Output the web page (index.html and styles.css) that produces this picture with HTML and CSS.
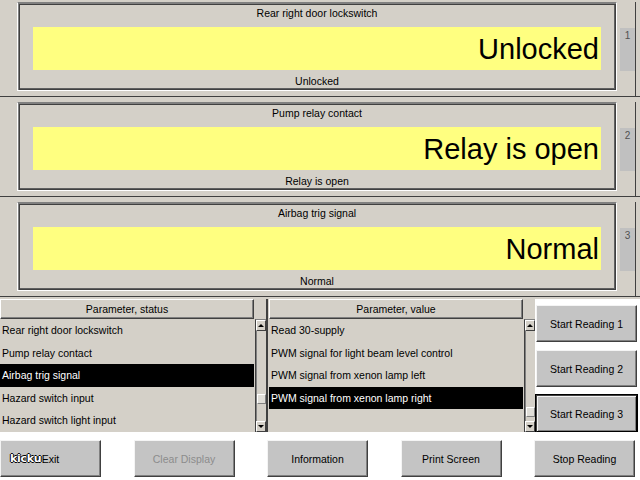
FILE: index.html
```html
<!DOCTYPE html>
<html>
<head>
<meta charset="utf-8">
<link rel="stylesheet" href="styles.css">
</head>
<body>
<div class="screen">
  <div class="rows">
    <div class="row">
      <div class="row-inner">
        <div class="gutter"></div>
        <div class="frame">
          <div class="frame-title">Rear right door lockswitch</div>
          <div class="display">Unlocked</div>
          <div class="frame-status">Unlocked</div>
        </div>
        <div class="tab-col"><div class="tab">1</div></div>
      </div>
      <div class="row-sep"></div>
    </div>
    <div class="row">
      <div class="row-inner">
        <div class="gutter"></div>
        <div class="frame">
          <div class="frame-title">Pump relay contact</div>
          <div class="display">Relay is open</div>
          <div class="frame-status">Relay is open</div>
        </div>
        <div class="tab-col"><div class="tab">2</div></div>
      </div>
      <div class="row-sep"></div>
    </div>
    <div class="row row-last">
      <div class="row-inner">
        <div class="gutter"></div>
        <div class="frame">
          <div class="frame-title">Airbag trig signal</div>
          <div class="display">Normal</div>
          <div class="frame-status">Normal</div>
        </div>
        <div class="tab-col"><div class="tab">3</div></div>
      </div>
      <div class="row-sep"></div>
    </div>
  </div>

  <div class="middle">
    <div class="list">
      <div class="list-body">
        <div class="list-header">Parameter, status</div>
        <div class="list-row">Rear right door lockswitch</div>
        <div class="list-row">Pump relay contact</div>
        <div class="list-row selected">Airbag trig signal</div>
        <div class="list-row">Hazard switch input</div>
        <div class="list-row">Hazard switch light input</div>
      </div>
      <div class="scroll-col">
        <div class="scroll-head"></div>
        <div class="scrollbar">
          <div class="sb-btn"><span class="arrow-up"></span></div>
          <div class="sb-track"><div class="sb-thumb thumb-a"></div></div>
          <div class="sb-btn"><span class="arrow-down"></span></div>
        </div>
      </div>
    </div>
    <div class="list-divider"></div>
    <div class="list">
      <div class="list-body">
        <div class="list-header">Parameter, value</div>
        <div class="list-row">Read 30-supply</div>
        <div class="list-row">PWM signal for light beam level control</div>
        <div class="list-row">PWM signal from xenon lamp left</div>
        <div class="list-row selected">PWM signal from xenon lamp right</div>
        <div class="list-row"></div>
      </div>
      <div class="scroll-col">
        <div class="scroll-head"></div>
        <div class="scrollbar">
          <div class="sb-btn"><span class="arrow-up"></span></div>
          <div class="sb-track"><div class="sb-thumb thumb-b"></div></div>
          <div class="sb-btn"><span class="arrow-down"></span></div>
        </div>
      </div>
    </div>
    <div class="side-buttons">
      <div class="btn">Start Reading 1</div>
      <div class="btn">Start Reading 2</div>
      <div class="btn btn-default">Start Reading 3</div>
    </div>
  </div>

  <div class="bottom-bar">
    <div class="btn">Exit</div>
    <div class="btn btn-disabled">Clear Display</div>
    <div class="btn">Information</div>
    <div class="btn">Print Screen</div>
    <div class="btn">Stop Reading</div>
  </div>

  <div class="watermark">kicku</div>
</div>
</body>
</html>
```

FILE: styles.css
```css
* { box-sizing: border-box; }

html, body {
  margin: 0;
  padding: 0;
}

body {
  width: 640px;
  height: 480px;
  overflow: hidden;
  background: #d4d0c8;
  font-family: "Liberation Sans", Arial, sans-serif;
  font-size: 10.5px;
  color: #000;
}

.screen {
  position: relative;
  width: 640px;
  height: 480px;
  display: flex;
  flex-direction: column;
}

/* ---------- top rows ---------- */
.rows {
  display: flex;
  flex-direction: column;
}

.row {
  height: 100px;
  display: flex;
  flex-direction: column;
}

.row-last {
  height: 98px;
}

.row-inner {
  height: 96px;
  padding-top: 2px;
  display: flex;
}

.row-sep {
  height: 1px;
  background: #404040;
}

.gutter {
  width: 17px;
}

.frame {
  width: 600px;
  height: 89px;
  border: 1px solid #fff;
  border-top-color: #808080;
  box-shadow: inset 1px 1px 0 #808080, inset 2px 2px 0 #404040,
              inset -1px -1px 0 #404040, inset -2px -2px 0 #606060;
  padding: 3px 15px 0 15px;
  display: flex;
  flex-direction: column;
  align-items: stretch;
}

.frame-title,
.frame-status {
  height: 14px;
  line-height: 14px;
  text-align: center;
  white-space: nowrap;
}

.display {
  margin-top: 7px;
  height: 43px;
  line-height: 43px;
  padding: 1px 2px 0 0;
  background: #ffff80;
  text-align: right;
  font-size: 29px;
  white-space: nowrap;
}

.frame-status {
  margin-top: 4px;
}

.tab-col {
  width: 19px;
  border-right: 1px solid #404040;
  padding-left: 3px;
}

.tab {
  margin-top: 26px;
  width: 15px;
  height: 43px;
  background: #c0c0c0;
  color: #505050;
  font-size: 10px;
  text-align: center;
  padding-top: 2px;
  line-height: 12px;
}

/* ---------- middle lists ---------- */
.middle {
  height: 134px;
  display: flex;
  padding-top: 1px;
}

.list {
  width: 266px;
  display: flex;
  overflow: hidden;
}

.list-body {
  width: 254px;
  display: flex;
  flex-direction: column;
}

.list-header {
  height: 20px;
  line-height: 18px;
  text-align: center;
  border: 1px solid;
  border-color: #fff #404040 #404040 #fff;
  box-shadow: inset -1px -1px 0 #808080;
}

.list-row {
  height: 22.5px;
  line-height: 22.5px;
  padding-left: 2px;
  white-space: nowrap;
  flex: none;
}

.list-row.selected {
  background: #000;
  color: #fff;
}

.scroll-col {
  width: 12px;
  display: flex;
  flex-direction: column;
}

.scroll-head {
  height: 20px;
  flex: none;
}

.scrollbar {
  flex: 1;
  display: flex;
  flex-direction: column;
  border-left: 1px solid #404040;
  border-top: 1px solid #808080;
  margin-left: 1px;
}

.sb-btn {
  height: 11px;
  flex: none;
  background: #d4d0c8;
  border: 1px solid;
  border-color: #fff #404040 #404040 #fff;
  display: flex;
  align-items: center;
  justify-content: center;
}

.arrow-up {
  width: 0;
  height: 0;
  border-left: 3px solid transparent;
  border-right: 3px solid transparent;
  border-bottom: 3px solid #000;
}

.arrow-down {
  width: 0;
  height: 0;
  border-left: 3px solid transparent;
  border-right: 3px solid transparent;
  border-top: 3px solid #000;
}

.sb-track {
  flex: 1;
  background: #d4d0c8;
  border-left: 1px solid #808080;
}

.sb-thumb {
  height: 10px;
  background: #e0ded8;
  border: 1px solid;
  border-color: #fff #808080 #808080 #fff;
}

.thumb-a { margin-top: 63px; }
.thumb-b { margin-top: 76px; }

.list-divider {
  width: 3px;
  border-left: 2px solid #404040;
}

.side-buttons {
  flex: 1;
  background: #fff;
  padding: 6px 3px 0 1px;
  display: flex;
  flex-direction: column;
  gap: 8px;
}

/* ---------- buttons ---------- */
.btn {
  height: 37px;
  flex: none;
  background: #c4c4c4;
  border: 1px solid;
  border-color: #f4f4f4 #404040 #404040 #f4f4f4;
  box-shadow: inset -1px -1px 0 #808080;
  display: flex;
  align-items: center;
  justify-content: center;
  white-space: nowrap;
  color: #000;
}

.btn-default {
  outline: 1px solid #000;
  outline-offset: 0;
  border-color: #404040 #000 #000 #404040;
  box-shadow: inset 1px 1px 0 #f4f4f4, inset -1px -1px 0 #808080;
}

.btn-disabled {
  color: #8c8c8c;
}

.bottom-bar {
  flex: 1;
  background: #fff;
  padding: 8px 5px 0 0;
  display: flex;
  justify-content: space-between;
  align-items: flex-start;
}

.bottom-bar .btn {
  width: 101px;
}

/* ---------- watermark ---------- */
.watermark {
  position: absolute;
  left: 10px;
  top: 452px;
  font-family: "DejaVu Sans", sans-serif;
  font-weight: bold;
  font-size: 11px;
  color: #fff;
  text-shadow: 1px 0 0 #000, -1px 0 0 #000, 0 1px 0 #000, 0 -1px 0 #000;
  letter-spacing: -0.3px;
}
```
